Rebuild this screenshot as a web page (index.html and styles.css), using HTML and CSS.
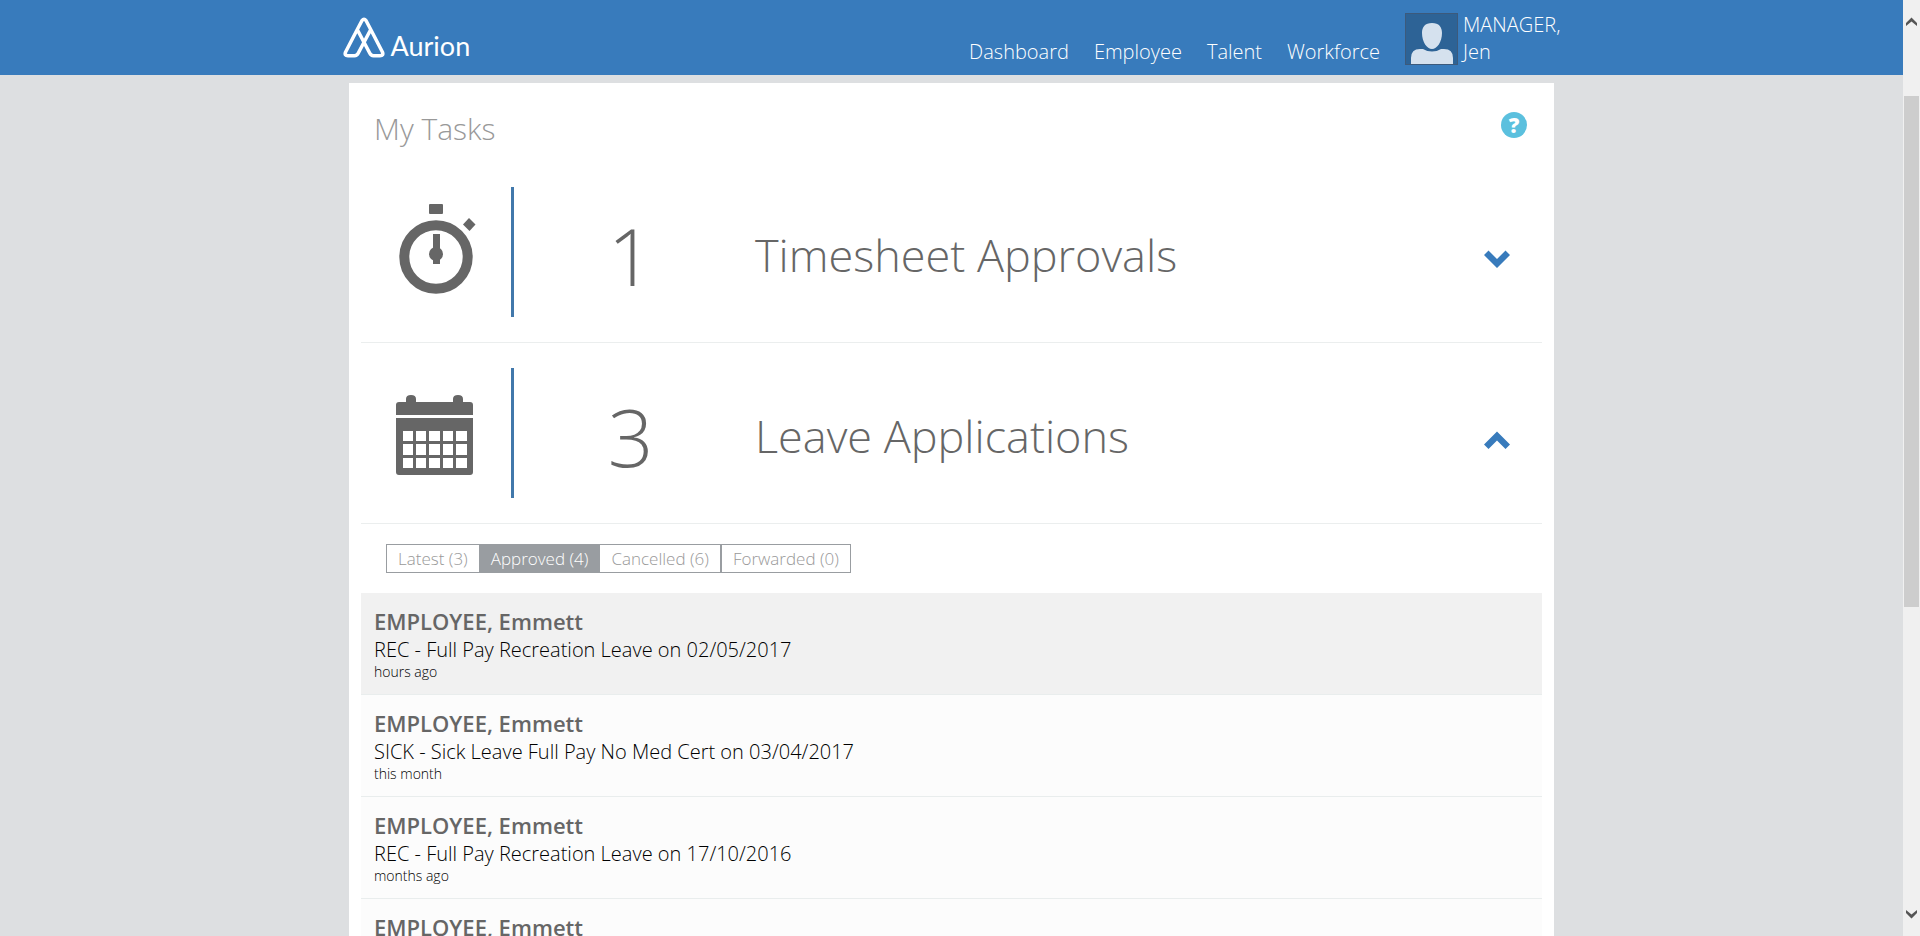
FILE: index.html
```html
<!DOCTYPE html>
<html lang="en">
<head>
<meta charset="utf-8">
<title>Aurion - My Tasks</title>
<link rel="stylesheet" href="styles.css">
</head>
<body>
<div class="window">
  <div class="page">
    <header class="topbar">
      <div class="topbar-inner">
        <a class="brand" href="#">
          <svg class="brand-mark" viewBox="0 0 42 42" width="42" height="42" aria-hidden="true">
            <path d="M14 13 L2.600 35 Q1 38.700 5 38.700 H11.500 Q14 38.700 15.200 36.300 L27.500 13 M28 13 L39.400 35 Q41 38.700 37 38.700 H30.500 Q28 38.700 26.800 36.300 L14.500 13 M14 13 L19 3.500 Q21 0.800 23 3.500 L28 13"/>
          </svg>
          <span class="brand-name">Aurion</span>
        </a>
        <nav class="menu">
          <a href="#">Dashboard</a>
          <a href="#">Employee</a>
          <a href="#">Talent</a>
          <a href="#">Workforce</a>
        </nav>
        <a class="user" href="#">
          <svg class="avatar" viewBox="0 0 53 52" width="53" height="52" aria-hidden="true">
            <rect class="avatar-bg" x="0.5" y="0.500" width="52" height="51"/>
            <path class="avatar-fg" d="M27 10 C34 10 37 14 37 20 C37 29 32 36 27 36 C22 36 17 29 17 20 C17 14 20 10 27 10 Z M6 51 V45 Q6 36 15 36 H18 Q22 38.500 27 38.500 Q32 38.500 36 36 H39 Q48 36 48 45 V51 Z"/>
          </svg>
          <span class="user-name">MANAGER,<br>Jen</span>
        </a>
      </div>
    </header>

    <main class="card">
      <div class="card-head">
        <h1>My Tasks</h1>
        <button class="help" type="button" aria-label="Help">?</button>
      </div>

      <section class="task">
        <div class="task-icon">
          <svg viewBox="0 0 80 90" width="80" height="90" aria-hidden="true">
            <rect x="31" y="0" width="14" height="10" rx="1"/>
            <path d="M71 14 L77.500 20.500 L71.500 27 L65 20.500 Z"/>
            <circle class="dial" cx="38" cy="53" r="31.700"/>
            <circle cx="38" cy="50" r="7"/>
            <path d="M35 30 H42 V60 H35 Z"/>
          </svg>
        </div>
        <span class="task-count">1</span>
        <h2>Timesheet Approvals</h2>
        <button class="toggle" type="button" aria-label="Expand Timesheet Approvals" aria-expanded="false">
          <svg viewBox="0 0 26 18" width="26" height="18" aria-hidden="true"><path d="M0 5 L4.500 0.500 L13 9 L21.500 0.500 L26 5 L13 18 Z"/></svg>
        </button>
      </section>

      <section class="task">
        <div class="task-icon">
          <svg viewBox="0 0 80 90" width="80" height="90" aria-hidden="true">
            <path fill-rule="evenodd" d="M-2 30 V20 Q-2 17 1 17 H8 V14 Q8 10 13 10 Q18 10 18 14 V17 H55 V14 Q55 10 60 10 Q65 10 65 14 V17 H72 Q75 17 75 20 V30 Z M-2 33 H75 V87 Q75 90 72 90 H1 Q-2 90 -2 87 Z
              M5 46 V56 H15 V46 Z M18 46 V56 H28 V46 Z M31 46 V56 H42 V46 Z M45 46 V56 H55 V46 Z M58 46 V56 H69 V46 Z
              M5 59 V70 H15 V59 Z M18 59 V70 H28 V59 Z M31 59 V70 H42 V59 Z M45 59 V70 H55 V59 Z M58 59 V70 H69 V59 Z
              M5 73 V83 H15 V73 Z M18 73 V83 H28 V73 Z M31 73 V83 H42 V73 Z M45 73 V83 H55 V73 Z M58 73 V83 H69 V73 Z"/>
          </svg>
        </div>
        <span class="task-count">3</span>
        <h2>Leave Applications</h2>
        <button class="toggle" type="button" aria-label="Collapse Leave Applications" aria-expanded="true">
          <svg viewBox="0 0 26 18" width="26" height="18" aria-hidden="true"><path d="M0 13.500 L4.500 18 L13 9.500 L21.500 18 L26 13.500 L13 0.500 Z"/></svg>
        </button>
      </section>

      <div class="filters">
        <button type="button">Latest (3)</button>
        <button type="button" class="active">Approved (4)</button>
        <button type="button">Cancelled (6)</button>
        <button type="button">Forwarded (0)</button>
      </div>

      <ul class="requests">
        <li class="selected"><strong>EMPLOYEE, Emmett</strong><span>REC - Full Pay Recreation Leave on 02/05/2017</span><small>hours ago</small></li>
        <li><strong>EMPLOYEE, Emmett</strong><span>SICK - Sick Leave Full Pay No Med Cert on 03/04/2017</span><small>this month</small></li>
        <li><strong>EMPLOYEE, Emmett</strong><span>REC - Full Pay Recreation Leave on 17/10/2016</span><small>months ago</small></li>
        <li><strong>EMPLOYEE, Emmett</strong></li>
      </ul>
    </main>
  </div>

  <div class="scrollbar" aria-hidden="true">
    <svg viewBox="0 0 11 9" width="11" height="9"><path d="M0 6 L5.500 0.500 L11 6 V9 L5.500 4.500 L0 9 Z"/></svg>
    <div class="track"><div class="thumb"></div></div>
    <svg viewBox="0 0 11 9" width="11" height="9"><path d="M0 3 L5.500 8.500 L11 3 V0 L5.500 4.500 L0 0 Z"/></svg>
  </div>
</div>
</body>
</html>
```

FILE: styles.css
```css
* { box-sizing: border-box; }

body {
  margin: 0;
  background: #dddfe1;
  color: #000;
  font-family: "Open Sans", "Noto Sans", sans-serif;
  font-weight: 300;
}

h1, h2, ul { margin: 0; padding: 0; font-weight: 300; }
a { color: inherit; text-decoration: none; }
button { font: inherit; cursor: pointer; }
svg { display: block; flex: none; }

.window { display: flex; height: 100vh; overflow: hidden; }
.page { flex: 1; min-width: 0; overflow: hidden; }

/* Top bar */
.topbar { background: #387bbc; color: #fff; }
.topbar-inner {
  display: flex;
  width: 64%;
  min-width: 1000px;
  height: 75px;
  margin: 0 auto;
  font-size: 20px;
  line-height: 27px;
}
.brand { display: flex; align-items: flex-end; gap: 6px; padding-bottom: 16px; }
.brand-mark { fill: none; stroke: #fff; stroke-width: 3.5; stroke-linejoin: round; }
.brand-name { font-family: Lato, sans-serif; font-weight: 400; font-size: 27px; line-height: 26px; }
.menu { display: flex; align-items: flex-end; gap: 25px; margin-left: auto; padding-bottom: 10px; }
.user { display: flex; gap: 5px; margin-left: 25px; padding: 11px 0; }
.avatar { margin-top: 2px; }
.avatar-bg { fill: #2d6396; stroke: #3c5a7c; }
.avatar-fg { fill: #d5e1ee; }
.user-name { white-space: nowrap; }

/* Task card */
.card { width: 1205px; max-width: 100%; margin: 8px auto 0; padding: 0 12px; background: #fff; }
.card-head {
  display: flex;
  justify-content: space-between;
  align-items: flex-start;
  padding: 24px 15px 11px 13px;
}
h1 { color: #999; font-size: 30px; line-height: 44px; }
.help {
  width: 26px;
  height: 26px;
  margin-top: 5px;
  padding: 0;
  border: 0;
  border-radius: 50%;
  background: #5bc0de;
  color: #fff;
  font-size: 21px;
  font-weight: 800;
  line-height: 26px;
}

.task {
  display: grid;
  grid-template-columns: 153px 233px 1fr auto;
  align-items: center;
  padding: 25px 32px 25px 0;
  border-bottom: 1px solid #ebeeee;
  color: #666;
}
.task-icon {
  height: 130px;
  padding: 17px 0 0 37px;
  border-right: 3px solid #4178ab;
}
.task-icon svg { overflow: visible; fill: #666; }
.task-icon .dial { fill: none; stroke: #666; stroke-width: 10; }
.task-count { padding-top: 6px; font-size: 80px; line-height: 108px; text-align: center; }
h2 { padding: 6px 0 0 8px; font-size: 45px; line-height: 64px; }
.toggle { padding: 14px 0 0; border: 0; background: none; }
.toggle svg { fill: #387bbc; }

/* Filters */
.filters { display: flex; padding: 20px 25px; }
.filters button {
  height: 29px;
  padding: 0 11px;
  border: 1px solid #999da1;
  border-radius: 0;
  background: #fff;
  color: #999;
  font-size: 17px;
  line-height: 27px;
}
.filters .active { background: #999da1; color: #fff; }
.filters .active + button,
.filters button:first-child { border-right-width: 1px; }
.filters .active + button { border-left-width: 0; }
.filters button:first-child { border-right-width: 0; }

/* Requests */
.requests { list-style: none; }
.requests li {
  display: flex;
  flex-direction: column;
  min-height: 102px;
  padding: 13px;
  border-bottom: 1px solid #e9eded;
  background: #fcfcfc;
}
.requests .selected { background: #f1f1f1; }
.requests strong { color: #666; font-size: 22px; font-weight: 600; line-height: 30px; }
.requests span { font-size: 20px; line-height: 28px; }
.requests small { font-size: 14px; line-height: 16px; }

/* Window scrollbar */
.scrollbar {
  display: flex;
  flex-direction: column;
  align-items: center;
  width: 17px;
  padding: 17px 1px;
  background: #f0f0f0;
}
.scrollbar svg { fill: #555; }
.track { flex: 1; width: 100%; padding: 70px 0 303px; }
.thumb { height: 100%; background: #cdcdcd; }
```
